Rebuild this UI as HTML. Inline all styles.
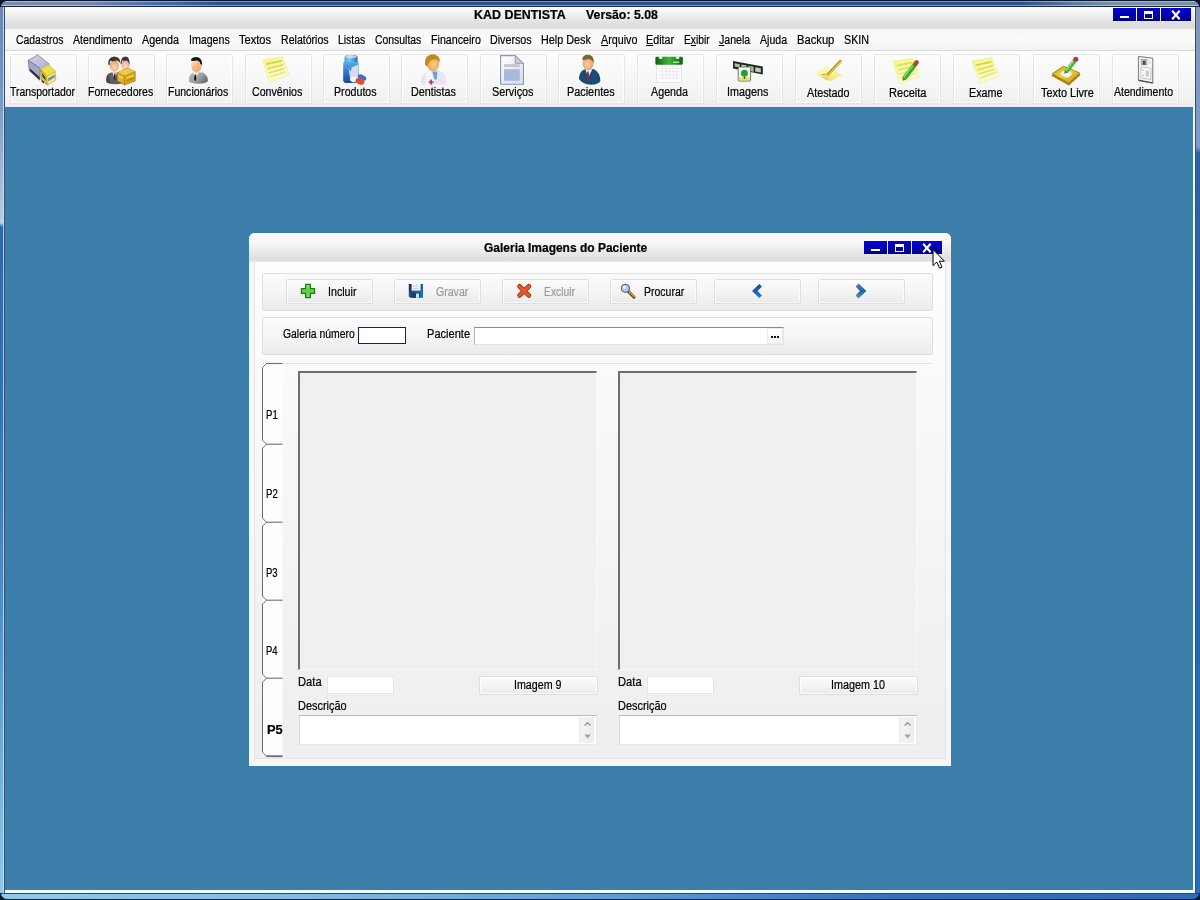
<!DOCTYPE html>
<html lang="pt-BR"><head><meta charset="utf-8"><title>KAD DENTISTA</title>
<style>
html,body{margin:0;padding:0}
body{width:1200px;height:900px;position:relative;overflow:hidden;background:#3d7fab;font-family:"Liberation Sans",sans-serif;font-size:12.5px;color:#000}
div,span,i,svg{position:absolute;box-sizing:border-box}
.t{white-space:pre;line-height:1;transform-origin:0 0;-webkit-text-stroke:0.22px currentColor}
.ic{overflow:visible}
u{text-decoration:underline;text-underline-offset:1px}
/* window frame */
.frame-t{left:0;top:0;width:1200px;height:7px;background:linear-gradient(#0c1830 0,#0c1830 1px,rgba(255,255,255,.38) 1px,rgba(255,255,255,.38) 2px,rgba(255,255,255,0) 2px,rgba(255,255,255,0) 5px,rgba(255,255,255,.42) 5px,rgba(255,255,255,.42) 6px,#1a2a44 6px,#1a2a44 7px),linear-gradient(90deg,#7c8cac 0,#7888ac 80px,#4a70b0 150px,#2a5290 220px,#2a5290 1020px,#5878a0 1070px,#7890a8 1110px,#7890a8 1200px)}
.frame-l{left:0;top:7px;width:5px;height:886px;background:linear-gradient(#6e86ae 0,#7a9ac4 95px,#b6cee6 216px,#2c68a8 220px,#3474b4 400px,#4c90cc 600px,#8cc8ec 886px);border-right:1px solid #34506e}
.frame-l:after{content:"";position:absolute;left:3px;top:0;width:1px;height:886px;background:rgba(220,236,246,.75)}
.frame-r{left:1195px;top:7px;width:5px;height:886px;background:linear-gradient(#8498b6 0,#7c9cc6 140px,#2c62a2 146px,#2a66ae 500px,#2a6cb8 886px);border-left:1px solid #34506e}
.frame-b{left:0;top:893px;width:1200px;height:7px;background:linear-gradient(90deg,#8ccaec 0,#7cbce6 300px,#5aa0da 600px,#2e72bc 900px,#2a6cb8 1200px);border-top:1px solid #2c4a6c;border-bottom:1px solid #0c1a30}
.client{left:5px;top:7px;width:1190px;height:886px;background:#3d7fab}
.titlebar{left:5px;top:7px;width:1190px;height:22px;background:linear-gradient(#fdfdfd 0,#f3f3f3 6px,#e8e8e8 12px,#dedede 17px,#dcdcdc 20px,#e2e2e2 22px)}
.menubar{left:5px;top:29px;width:1190px;height:22px;background:linear-gradient(#f6f6f6,#fbfbfb 60%,#f2f2f2);border-bottom:1px solid #dadada}
.toolbar{left:5px;top:51px;width:1190px;height:56px;background:linear-gradient(#fefefe 0,#f8f8f8 20px,#f1f1f1 48px,#ededf5 53px,#ebebf5 56px)}
.mdi{left:5px;top:107px;width:1188px;height:783px;background:#3d7fab;box-shadow:inset 1px 1px 0 #587494}
.mdi-edge-r{left:1193px;top:107px;width:2px;height:786px;background:#f2fbff}
.mdi-edge-b{left:5px;top:890px;width:1190px;height:3px;background:#f2fbff}
/* caption buttons */
.cap{background:linear-gradient(#0606cc 0,#0202ba 45%,#00007e 100%);overflow:hidden}
.cmin{left:7px;top:8px;width:9px;height:2px;background:#fff}
.cmax{left:7px;top:3px;width:9px;height:8px;border:1px solid #fff;border-top-width:3px}
.cx{left:10px;top:2px}
/* toolbar buttons */
.tbtn{top:54px;width:67px;height:50px;border:1px solid #e5e5e5;border-radius:2px;background:linear-gradient(#fcfcfc,#f6f6f6 60%,#f0f0f0);box-shadow:inset 0 0 0 1px rgba(255,255,255,.8)}
/* dialog */
.dlg{left:249px;top:233px;width:702px;height:533px;border-radius:6px 6px 0 0;background:#f7f7f7;box-shadow:inset 0 0 0 1px #eaf6fc}
.dlg-title{left:0;top:0;width:702px;height:29px;border-radius:6px 6px 0 0;background:linear-gradient(#ffffff 0,#f6f6f6 10px,#e8e8e8 20px,#dedede 26px,#e6e6e6 29px)}
.dlg-body{left:5px;top:29px;width:692px;height:497px;background:linear-gradient(#fefefe 0,#f9f9f9 150px,#f0f0f0 400px,#efefef 497px);border:1px solid #e9e4e4;border-top:none}
.panel{border:1px solid #e0e0e0;border-radius:2px;background:linear-gradient(#fbfbfb,#f5f5f5 50%,#ececec)}
.btn{border:1px solid #dedede;border-radius:2px;background:linear-gradient(#fbfbfb,#f3f3f3 55%,#ebebeb);box-shadow:inset 0 0 0 1px rgba(255,255,255,.7)}
.inp{background:#fff}
.focus{border:1px solid #1c1c64}
.sunk{border:1px solid #e4e4e4;border-top-color:#8a8a8a;border-left-color:#b4b4b4}
.flat{border:1px solid #e4e4e4}
.ta{border:1px solid #e8e8e8;border-top-color:#b8b8b8;border-left-color:#d8d8d8}
.dots{background:linear-gradient(#ffffff,#f5f5f5);border:1px solid #ebebeb}
.dots i{top:7px;width:2px;height:2px;background:#111}
.dots i:nth-child(1){left:3px}.dots i:nth-child(2){left:6px}.dots i:nth-child(3){left:9px}
.imgp{background:#f0f0f0;border:1px solid #f8f8f8;border-top:2px solid #6e6e6e;border-left:2px solid #6e6e6e}
.sb{width:15px;height:26px;background:linear-gradient(90deg,#f4f4f4,#ececec);border-left:1px solid #e8e8e8}
.pgline{left:282px;top:363px;width:651px;height:1px;background:#e2e2e2}
.txt{left:0;top:0;width:1200px;height:900px;will-change:transform}
.cr{width:7px;height:7px}
.cr1{left:0;top:0;background:radial-gradient(circle at 100% 100%,rgba(12,24,48,0) 5.5px,#0c1830 6.5px)}
.cr2{left:1193px;top:0;background:radial-gradient(circle at 0 100%,rgba(12,24,48,0) 5.5px,#0c1830 6.5px)}
.cr3{left:0;top:893px;background:radial-gradient(circle at 100% 0,rgba(12,24,48,0) 5.5px,#0c1830 6.5px)}
.cr4{left:1193px;top:893px;background:radial-gradient(circle at 0 0,rgba(12,24,48,0) 5.5px,#0c1830 6.5px)}

</style></head>
<body>
<div class="frame"></div>
<div class="frame-l"></div><div class="frame-r"></div><div class="frame-t"></div><div class="frame-b"></div>
<div class="client"></div>
<div class="titlebar"></div>
<div class="menubar"></div>
<div class="toolbar"></div>
<div class="mdi"></div><div class="mdi-edge-r"></div><div class="mdi-edge-b"></div>
<div class="cap main" style="left:1113px;top:8px;width:23px;height:13px"><i class="cmin"></i></div><div class="cap main" style="left:1137px;top:8px;width:23px;height:13px"><i class="cmax"></i></div><div class="cap main" style="left:1161px;top:8px;width:30px;height:13px"><svg width="10" height="10" viewBox="0 0 10 10" class="cx"><path d="M1.2,0.8 L8.6,9.2 M8.6,0.8 L1.2,9.2" stroke="#fff" stroke-width="2.1"/></svg></div>
<div class="tbtn" style="left:10.0px"></div>
<svg class="ic" style="left:26px;top:52px" width="34" height="36" viewBox="26 52 34 36" >
<defs><linearGradient id="tk1" x1="0" y1="0" x2="1" y2="1"><stop offset="0" stop-color="#d0d0ea"/><stop offset="1" stop-color="#b4b4d6"/></linearGradient></defs>
<polygon points="28.2,60.2 37.8,54.9 49.3,64.2 39.8,68.2" fill="url(#tk1)" stroke="#80809a" stroke-width="0.8"/>
<polygon points="28.2,60.2 39.8,68.2 39.8,80.2 29.3,70.6" fill="#a6a6c6" stroke="#70708c" stroke-width="0.8"/>
<polygon points="39.8,68.2 49.3,64.2 49.6,67 40,71" fill="#e8d8e0"/>
<polygon points="29.6,70.8 39.6,80 39.6,77 30,68.5" fill="#303038"/>
<polygon points="40.4,69 49.6,65.4 55.2,71.6 46.4,76.6" fill="#efe23c" stroke="#b8a820" stroke-width="0.6"/>
<polygon points="40.4,69 46.4,76.6 47.4,85 41.4,79.6" fill="#d6c63a" stroke="#8c7c18" stroke-width="0.6"/>
<polygon points="46.4,76.6 55.2,71.6 55.8,80 47.4,85" fill="#f4ec94" stroke="#a89820" stroke-width="0.6"/>
<polygon points="47.6,78.6 54.6,74.6 54.9,77.2 48,81.4" fill="#8c8c84"/>
<polygon points="42,73 45.2,77.2 45.6,80.4 42.4,76.6" fill="#3c3820"/>
<polygon points="41.6,79.8 44,82 44,83.6 41.6,81.4" fill="#181810"/>
</svg>
<div class="tbtn" style="left:88.0px"></div>
<svg class="ic" style="left:104px;top:54px" width="34" height="33" viewBox="104 54 34 33" >
<defs><linearGradient id="sp1" x1="0" y1="0" x2="1" y2="1"><stop offset="0" stop-color="#ecc838"/><stop offset="1" stop-color="#cc980c"/></linearGradient>
<radialGradient id="sp2" cx="0.5" cy="0.6" r="0.6"><stop offset="0" stop-color="#fcd8b0"/><stop offset="0.7" stop-color="#f0b080"/><stop offset="1" stop-color="#c88050"/></radialGradient>
<radialGradient id="sp3" cx="0.5" cy="0.6" r="0.6"><stop offset="0" stop-color="#fcdcd0"/><stop offset="0.7" stop-color="#f0b8a8"/><stop offset="1" stop-color="#c08070"/></radialGradient></defs>
<path d="M106.2,80 Q106,74 111,72.4 L118.6,72.4 Q122,73.4 122.4,78 L122,83.6 Q114,85.6 106.8,82.4 Z" fill="#66605a"/>
<path d="M106.2,80 Q106,76 108.6,73.6 L110.6,83.6 Q108,83.2 106.8,82.4 Z" fill="#4c4842"/>
<polygon points="112.4,72.4 114.8,79 117.2,72.4" fill="#f6eeea"/>
<polygon points="114.2,73.4 115.6,73.4 115.8,79 114.8,80.8 113.8,79" fill="#561a4c"/>
<ellipse cx="114.4" cy="66" rx="4.5" ry="5.8" fill="url(#sp2)"/>
<path d="M108.2,64.6 Q107.8,57 114.4,56.6 Q121,57 120.6,65 Q119.6,61 116.6,60.6 Q113,61.6 110.4,60.8 Q109.6,62.6 109.6,65.6 Z" fill="#3e3628"/>
<ellipse cx="125.4" cy="65.2" rx="3.9" ry="5.3" fill="url(#sp3)"/>
<path d="M120.8,63.2 Q120.8,56.8 125.8,56.6 Q130,57 129.6,65.4 Q128.8,61.2 126.6,60.4 Q123.6,61 122.2,60.6 Q121.6,62 121.6,64.6 Z" fill="#4a2c36"/>
<polygon points="117.4,72.6 127.6,68 135.2,71.6 135.2,81 124.4,85 117.4,80.6" fill="url(#sp1)" stroke="#a88010" stroke-width="0.7"/>
<polygon points="117.4,72.6 127.6,68 135.2,71.6 124.8,76.2" fill="#f0d048" opacity="0.85"/>
<polyline points="117.4,72.6 124.8,76.2 135.2,71.6" fill="none" stroke="#a0780c" stroke-width="0.7"/>
<line x1="124.8" y1="76.2" x2="124.4" y2="85" stroke="#a0780c" stroke-width="0.7"/>
<polygon points="126.6,77.4 133.6,74.8 133.6,76.2 126.6,78.8" fill="#f4dc60"/>
<polygon points="126.6,79.8 133.6,77.2 133.6,78.8 126.6,81.4" fill="#b88810"/>
<polygon points="118.8,75.4 123.4,77.6 123.4,79 118.8,76.8" fill="#f0d450"/>
</svg>
<div class="tbtn" style="left:166.4px"></div>
<svg class="ic" style="left:186px;top:54px" width="26" height="32" viewBox="186 54 26 32" >
<defs><linearGradient id="em1" x1="0" y1="0" x2="0.6" y2="1"><stop offset="0" stop-color="#fdfdf6"/><stop offset="0.6" stop-color="#f6b888"/><stop offset="1" stop-color="#f0a870"/></linearGradient>
<linearGradient id="em2" x1="0" y1="0" x2="1" y2="0.6"><stop offset="0" stop-color="#b4b4b8"/><stop offset="0.6" stop-color="#a0a0a4"/><stop offset="1" stop-color="#6c6c70"/></linearGradient></defs>
<path d="M188.8,81.6 Q188.8,75 193,72.6 L203,72.6 Q208,75.6 208,81 Q206,83.8 198,83.8 Q191.6,83.6 188.8,81.6 Z" fill="url(#em2)"/>
<polygon points="192.8,72.6 195.4,79.4 198.6,72.6" fill="#f8f4e0"/>
<polygon points="194.6,74.4 196.2,74.4 196.4,79 195.2,81.6 194,79" fill="#18181c"/>
<ellipse cx="196.4" cy="65.4" rx="5.4" ry="6.9" fill="url(#em1)"/>
<path d="M190.8,60.6 Q191,57 196.6,57 Q202.4,57.4 202,65 Q201.6,64.6 200.4,64 Q200,60.4 196,60.4 Q192.4,61.6 190.8,60.6 Z" fill="#181818"/>
</svg>
<div class="tbtn" style="left:245.0px"></div>
<svg class="ic" style="left:260px;top:54px" width="32" height="31" viewBox="260 54 32 31" ><defs><linearGradient id="nt1" x1="0" y1="0" x2="0.5" y2="1"><stop offset="0" stop-color="#f5f578"/><stop offset="1" stop-color="#fcfcd8"/></linearGradient></defs><polygon points="262.9,59.8 282.4,56.7 289.1,74.9 269.1,82.4" fill="url(#nt1)" stroke="#ececa0" stroke-width="0.7"/><line x1="266.2" y1="64.1" x2="281.8" y2="60.9" stroke="#d2d24c" stroke-width="1.6" opacity="1.00"/><line x1="267.5" y1="68.8" x2="283.2" y2="64.8" stroke="#d2d24c" stroke-width="1.6" opacity="0.83"/><line x1="268.7" y1="73.0" x2="284.5" y2="68.4" stroke="#d2d24c" stroke-width="1.6" opacity="0.66"/><line x1="269.8" y1="77.0" x2="285.7" y2="71.7" stroke="#d2d24c" stroke-width="1.6" opacity="0.49"/></svg>
<div class="tbtn" style="left:323.0px"></div>
<svg class="ic" style="left:341px;top:53px" width="28" height="33" viewBox="341 53 28 33" >
<defs><linearGradient id="pl1" x1="0" y1="0" x2="1" y2="0"><stop offset="0" stop-color="#4c98dc"/><stop offset="0.35" stop-color="#88ccf0"/><stop offset="1" stop-color="#3468b8"/></linearGradient>
<linearGradient id="pl2" x1="0" y1="0" x2="0" y2="1"><stop offset="0" stop-color="#5cb4e8"/><stop offset="0.5" stop-color="#2c78cc"/><stop offset="1" stop-color="#1448a0"/></linearGradient></defs>
<rect x="343.2" y="61" width="15.4" height="22" rx="3" fill="url(#pl2)"/>
<path d="M344.6,57 Q344.6,54.8 351,54.8 Q357.6,54.8 357.6,57 L357.6,62 L344.6,62 Z" fill="url(#pl1)"/>
<ellipse cx="351" cy="56.6" rx="5.6" ry="1.6" fill="#c8e8f8" opacity="0.8"/>
<polygon points="348.6,68.4 358.4,64.6 358.4,76.6 350.4,80.4" fill="#d8d8f0"/>
<polygon points="349.2,68.6 352,67.6 350,71.6" fill="#4868a0"/>
<ellipse cx="362" cy="77.6" rx="4.6" ry="2.6" fill="#3c70c0" transform="rotate(25 362 77.6)"/>
<ellipse cx="354.6" cy="79.4" rx="4.4" ry="2.8" fill="#f4f0f8"/>
<ellipse cx="360" cy="81.4" rx="4.6" ry="2.9" fill="#e84828" transform="rotate(20 360 81.4)"/>
</svg>
<div class="tbtn" style="left:401.4px"></div>
<svg class="ic" style="left:418px;top:52px" width="31" height="34" viewBox="418 52 31 34" >
<defs><radialGradient id="dt1" cx="0.55" cy="0.55" r="0.6"><stop offset="0" stop-color="#fcd088"/><stop offset="1" stop-color="#e89c48"/></radialGradient></defs>
<path d="M420.6,84.8 Q420.4,75 425.6,72.2 L431,70 L437.6,70 L442.4,72.2 Q446.6,75 446.6,84.8 Z" fill="#e8e6f6"/>
<path d="M425.6,72.2 L431,70 L434,78 L432,84.8 L426,84.8 Z" fill="#f4f2fc"/>
<polygon points="432.2,71.6 437.4,71.6 436.8,79.4 434.4,79.4" fill="#6c9ce8"/>
<rect x="428.6" y="81" width="5" height="2.2" fill="#e06078"/><rect x="430.2" y="79.6" width="1.8" height="5" fill="#c03858"/>
<ellipse cx="433" cy="63.6" rx="6.2" ry="7.6" fill="url(#dt1)"/>
<path d="M425,64 Q424.4,55 432.4,54.2 Q440.4,54.6 439.8,62 Q437.6,58.4 433.6,59.4 Q428.4,59.6 427.6,66.6 Q425.6,66.6 425,64 Z" fill="#c48820"/>
</svg>
<div class="tbtn" style="left:480.0px"></div>
<svg class="ic" style="left:498px;top:53px" width="28" height="34" viewBox="498 53 28 34" >
<defs><linearGradient id="dc1" x1="0" y1="0" x2="0.7" y2="1"><stop offset="0" stop-color="#ffffff"/><stop offset="1" stop-color="#d8e2f4"/></linearGradient></defs>
<path d="M500.6,55.6 H515.2 L523.4,63.4 V84.2 H500.6 Z" fill="url(#dc1)" stroke="#8c98ac" stroke-width="1.1"/>
<polygon points="515.2,55.6 515.2,63.4 523.4,63.4" fill="#c4cce0" stroke="#8c98ac" stroke-width="0.8"/>
<rect x="504" y="64.2" width="15.8" height="2.8" fill="#c4c8cc"/>
<rect x="504" y="69.2" width="15.8" height="11.6" fill="#aab8dc"/>
</svg>
<div class="tbtn" style="left:558.0px"></div>
<svg class="ic" style="left:577px;top:53px" width="26" height="34" viewBox="577 53 26 34" >
<defs><radialGradient id="pt1" cx="0.45" cy="0.55" r="0.6"><stop offset="0" stop-color="#fcd0a8"/><stop offset="1" stop-color="#e09868"/></radialGradient></defs>
<path d="M579,79 Q579,72 584,69.6 L593.6,69 Q600.4,72.4 600.4,81 Q598,85 591,84.8 Q582,84 579,79 Z" fill="#1c4a74"/>
<polygon points="585.4,69.6 588.2,77.6 592.4,69.2" fill="#f0ecf4"/>
<polygon points="587.2,71.6 588.8,71.6 589,78 587.8,81 586.6,78" fill="#902848"/>
<ellipse cx="588" cy="63.4" rx="5.4" ry="6.8" fill="url(#pt1)"/>
<path d="M582.2,59.8 Q582.4,54.8 588.4,54.8 Q594.4,55.2 593.8,63.6 Q592.4,58.8 588,59 Q584.4,60.4 582.2,59.8 Z" fill="#7c6434"/>
</svg>
<div class="tbtn" style="left:637.0px"></div>
<svg class="ic" style="left:653px;top:54px" width="32" height="31" viewBox="653 54 32 31" >
<defs><linearGradient id="cl1" x1="0" y1="0" x2="1" y2="0"><stop offset="0" stop-color="#0c640c"/><stop offset="0.5" stop-color="#44b444"/><stop offset="1" stop-color="#0c640c"/></linearGradient></defs>
<rect x="656.6" y="64" width="25" height="18.4" fill="#fdfdfd" stroke="#e2e2e6" stroke-width="0.8"/>
<g stroke="#e4dcea" stroke-width="0.6"><line x1="659" y1="68.4" x2="679.6" y2="68.4"/><line x1="659" y1="71.6" x2="679.6" y2="71.6"/><line x1="659" y1="74.8" x2="679.6" y2="74.8"/><line x1="659" y1="78" x2="679.6" y2="78"/>
<line x1="662.4" y1="67" x2="662.4" y2="80"/><line x1="666" y1="67" x2="666" y2="80"/><line x1="669.6" y1="67" x2="669.6" y2="80"/><line x1="673.2" y1="67" x2="673.2" y2="80"/><line x1="676.8" y1="67" x2="676.8" y2="80"/></g>
<rect x="655.4" y="56.8" width="27.4" height="8" rx="1.4" fill="url(#cl1)"/>
<ellipse cx="660.6" cy="57.6" rx="1.8" ry="1.5" fill="#e8f8e8"/><ellipse cx="677.6" cy="57.6" rx="1.8" ry="1.5" fill="#e8f8e8"/>
<rect x="673" y="61.4" width="6.4" height="1.6" rx="0.8" fill="#a8f0a0"/>
</svg>
<div class="tbtn" style="left:716.0px"></div>
<svg class="ic" style="left:731px;top:59px" width="34" height="24" viewBox="731 59 34 24" >
<polygon points="733,61 762.8,66.4 762.8,74.6 733,68.6" fill="#1c2c1c"/>
<polygon points="734.6,63.2 739.8,64.2 739.8,67.6 734.6,66.6" fill="#a8c0a0"/>
<polygon points="741.4,64.4 746.6,65.4 746.6,68.8 741.4,67.8" fill="#b8c8c8"/>
<polygon points="748.2,65.8 753.6,66.8 753.6,71.8 748.2,70.8" fill="#b4c0b0"/>
<polygon points="755.2,67.2 760.8,68.2 760.8,72.4 755.2,71.4" fill="#c4ccb8"/>
<rect x="738.2" y="67" width="12.4" height="14" rx="1" fill="#f2f8f4" stroke="#4c5c3c" stroke-width="0.8"/>
<rect x="739" y="77.4" width="10.8" height="3" fill="#e8e444"/>
<rect x="743.8" y="75" width="1.4" height="4" fill="#2c6c1c"/>
<circle cx="744.4" cy="73.2" r="3.5" fill="#2ca02c"/>
</svg>
<div class="tbtn" style="left:795.0px"></div>
<svg class="ic" style="left:812px;top:58px" width="32" height="26" viewBox="812 58 32 26" >
<defs><linearGradient id="sg1" x1="0" y1="0" x2="0.3" y2="1"><stop offset="0" stop-color="#fbfbf0"/><stop offset="0.5" stop-color="#f8f6b0"/><stop offset="1" stop-color="#f4e870"/></linearGradient></defs>
<polygon points="814.2,73.6 826,64.8 842,75.2 829.8,81.6" fill="url(#sg1)"/>
<polygon points="822,77 828,74.6 829.6,80 825,80" fill="#f0c878" opacity="0.7"/>
<line x1="840.4" y1="61.2" x2="828.4" y2="74" stroke="#b89818" stroke-width="2.9" stroke-linecap="round"/>
<line x1="840.8" y1="61.6" x2="828.8" y2="74.4" stroke="#e8d050" stroke-width="1.1" stroke-linecap="round"/>
<line x1="828.4" y1="74" x2="821.4" y2="74.8" stroke="#c8b030" stroke-width="1.2"/>
</svg>
<div class="tbtn" style="left:874.0px"></div>
<svg class="ic" style="left:890px;top:55px" width="33" height="31" viewBox="890 55 33 31" ><defs><linearGradient id="nt3" x1="0" y1="0" x2="0.5" y2="1"><stop offset="0" stop-color="#f5f578"/><stop offset="1" stop-color="#fcfcd8"/></linearGradient></defs><polygon points="893.1,61.6 912.7,58.0 919.8,76.7 899.8,83.3" fill="url(#nt3)" stroke="#ececa0" stroke-width="0.7"/><line x1="896.5" y1="65.7" x2="912.2" y2="62.4" stroke="#dcdc60" stroke-width="1.6" opacity="1.00"/><line x1="897.9" y1="70.2" x2="913.7" y2="66.3" stroke="#dcdc60" stroke-width="1.6" opacity="0.83"/><line x1="899.2" y1="74.3" x2="915.0" y2="70.0" stroke="#dcdc60" stroke-width="1.6" opacity="0.66"/><line x1="900.4" y1="78.1" x2="916.3" y2="73.4" stroke="#dcdc60" stroke-width="1.6" opacity="0.49"/>
<line x1="915.2" y1="64.2" x2="904.6" y2="78" stroke="#3cac2c" stroke-width="4.6"/>
<line x1="914.2" y1="63.6" x2="903.8" y2="77.2" stroke="#7ce060" stroke-width="1.4"/>
<polygon points="902.6,76.4 906.4,79.4 902.6,80.8" fill="#6c7c1c"/>
<line x1="916.6" y1="62.4" x2="915.2" y2="64.2" stroke="#b04c20" stroke-width="4.6" stroke-linecap="round"/>
</svg>
<div class="tbtn" style="left:953.4px"></div>
<svg class="ic" style="left:969px;top:55px" width="33" height="31" viewBox="969 55 33 31" ><defs><linearGradient id="nt2" x1="0" y1="0" x2="0.5" y2="1"><stop offset="0" stop-color="#f5f578"/><stop offset="1" stop-color="#fcfcd8"/></linearGradient></defs><polygon points="971.8,61.1 991.8,57.6 999.3,75.8 979.8,83.3" fill="url(#nt2)" stroke="#ececa0" stroke-width="0.7"/><line x1="975.5" y1="65.3" x2="991.4" y2="61.9" stroke="#d2d24c" stroke-width="1.6" opacity="1.00"/><line x1="977.1" y1="69.9" x2="993.0" y2="65.8" stroke="#d2d24c" stroke-width="1.6" opacity="0.83"/><line x1="978.6" y1="74.0" x2="994.4" y2="69.3" stroke="#d2d24c" stroke-width="1.6" opacity="0.66"/><line x1="980.1" y1="78.0" x2="995.8" y2="72.6" stroke="#d2d24c" stroke-width="1.6" opacity="0.49"/></svg>
<div class="tbtn" style="left:1033.0px"></div>
<svg class="ic" style="left:1050px;top:56px" width="32" height="31" viewBox="1050 56 32 31" >
<defs><linearGradient id="st1" x1="0" y1="0" x2="1" y2="1"><stop offset="0" stop-color="#b89c18"/><stop offset="0.45" stop-color="#ecd23c"/><stop offset="1" stop-color="#c8921c"/></linearGradient>
<radialGradient id="st2" cx="0.5" cy="0.5" r="0.5"><stop offset="0" stop-color="#ffffff"/><stop offset="0.6" stop-color="#f4f4ec"/><stop offset="1" stop-color="#e8d890" stop-opacity="0.2"/></radialGradient></defs>
<polygon points="1052.2,75.4 1063.4,68 1079.8,74.8 1068.8,84.8" fill="#a8800c" stroke="#a8800c" stroke-width="1.2" stroke-linejoin="round"/>
<polygon points="1052.2,73.8 1063.4,66.2 1079.8,73 1068.8,83" fill="url(#st1)" stroke="#b08c14" stroke-width="1" stroke-linejoin="round"/>
<polygon points="1058.6,73.6 1064.8,69.4 1073.6,73 1067.6,78.6" fill="url(#st2)"/>
<line x1="1075" y1="60.4" x2="1066.6" y2="71.2" stroke="#48b438" stroke-width="4.2"/>
<line x1="1074" y1="60" x2="1065.8" y2="70.6" stroke="#98e478" stroke-width="1.3"/>
<polygon points="1064.6,70 1068.2,72.6 1064.4,73.8" fill="#407868"/>
<circle cx="1075.8" cy="59.2" r="2.5" fill="#b43452"/>
</svg>
<div class="tbtn" style="left:1112.0px"></div>
<svg class="ic" style="left:1136px;top:54px" width="19" height="32" viewBox="1136 54 19 32" >
<polygon points="1138.4,56.4 1152.8,58.2 1152.8,83.2 1138.4,80.6" fill="#f4f4f4" stroke="#787878" stroke-width="1"/>
<line x1="1138.4" y1="80.2" x2="1152.8" y2="82.8" stroke="#585858" stroke-width="1.3"/>
<rect x="1141.2" y="59.6" width="5.6" height="5.2" fill="#d8d8d8" stroke="#8c8c8c" stroke-width="0.6"/>
<rect x="1142.6" y="60.6" width="3" height="4.2" fill="#4c4c4c"/>
<line x1="1148" y1="61" x2="1151" y2="61.4" stroke="#c4c4c4" stroke-width="0.6"/><line x1="1148" y1="63" x2="1151" y2="63.4" stroke="#c4c4c4" stroke-width="0.6"/>
<polygon points="1140.8,66.8 1150.8,68.2 1150.8,79.4 1140.8,77.8" fill="#fdfdfd" stroke="#acacac" stroke-width="0.7"/>
<rect x="1145.6" y="70.6" width="3.2" height="6" fill="#c8c8c8"/>
<line x1="1142.2" y1="70" x2="1143.8" y2="70.2" stroke="#8890a8" stroke-width="0.8"/><line x1="1142.2" y1="75.6" x2="1143.8" y2="75.8" stroke="#8890a8" stroke-width="0.8"/>
</svg>
<div class="dlg"><div class="dlg-title"></div><div class="dlg-body"></div></div>
<div class="cap dlgcap" style="left:864px;top:241px;width:23px;height:13px"><i class="cmin"></i></div><div class="cap dlgcap" style="left:888px;top:241px;width:23px;height:13px"><i class="cmax"></i></div><div class="cap dlgcap" style="left:912px;top:241px;width:30px;height:13px"><svg width="10" height="10" viewBox="0 0 10 10" class="cx"><path d="M1.2,0.8 L8.6,9.2 M8.6,0.8 L1.2,9.2" stroke="#fff" stroke-width="2.1"/></svg></div>
<div class="panel" style="left:262px;top:273px;width:671px;height:38px"></div>
<div class="panel" style="left:262px;top:317px;width:671px;height:38px"></div>
<div class="btn" style="left:286px;top:279px;width:87px;height:25px"></div>
<svg class="ic" style="left:299px;top:282px" width="18" height="18" viewBox="299 282 18 18" >
<defs><linearGradient id="pg1" x1="0" y1="0" x2="0" y2="1"><stop offset="0" stop-color="#90e878"/><stop offset="0.5" stop-color="#5cd040"/><stop offset="1" stop-color="#78dc60"/></linearGradient></defs>
<path d="M305.6,284.4 H310.4 V288.6 H314.6 V293.4 H310.4 V297.6 H305.6 V293.4 H301.4 V288.6 H305.6 Z" fill="url(#pg1)" stroke="#1c7c0c" stroke-width="1.2" stroke-linejoin="miter"/>
</svg>
<div class="btn" style="left:394px;top:279px;width:87px;height:25px"></div>
<svg class="ic" style="left:407px;top:282px" width="18" height="18" viewBox="407 282 18 18" >
<defs><linearGradient id="sv1" x1="0" y1="0" x2="1" y2="1"><stop offset="0" stop-color="#0c2440"/><stop offset="0.5" stop-color="#1c58a0"/><stop offset="1" stop-color="#2c70c0"/></linearGradient></defs>
<path d="M408.8,284 H423 V297.8 H410.2 L408.8,296.4 Z" fill="url(#sv1)"/>
<rect x="411.6" y="284" width="9" height="6.6" fill="#f0f4fc"/>
<line x1="413" y1="286" x2="418" y2="286" stroke="#b0b8c8" stroke-width="0.6"/><line x1="413" y1="288.4" x2="418" y2="288.4" stroke="#c8a0b8" stroke-width="0.6"/>
<rect x="411.4" y="293.2" width="8.4" height="4.6" fill="#183c70"/>
<rect x="416" y="293.6" width="3" height="4.2" fill="#b8ecf8"/>
</svg>
<div class="btn" style="left:502px;top:279px;width:87px;height:25px"></div>
<svg class="ic" style="left:515px;top:282px" width="18" height="18" viewBox="515 282 18 18" >
<g stroke-linecap="round"><path d="M519.6,286.4 L528.8,295.4 M528.8,286.4 L519.6,295.4" stroke="#8c3010" stroke-width="4.8"/>
<path d="M519.6,286.4 L528.8,295.4 M528.8,286.4 L519.6,295.4" stroke="#ec5430" stroke-width="3.2"/></g>
</svg>
<div class="btn" style="left:610px;top:279px;width:87px;height:25px"></div>
<svg class="ic" style="left:618px;top:282px" width="20" height="18" viewBox="618 282 20 18" >
<line x1="628.6" y1="291.6" x2="634" y2="297.2" stroke="#5c4018" stroke-width="3" stroke-linecap="round"/>
<line x1="629.2" y1="291.8" x2="634" y2="296.8" stroke="#d09848" stroke-width="1.4" stroke-linecap="round"/>
<circle cx="625.4" cy="288.3" r="4" fill="#b0ccf4" stroke="#5c6c74" stroke-width="1.2"/>
<circle cx="624.4" cy="287.2" r="1.6" fill="#e4f0fc"/>
</svg>
<div class="btn" style="left:714px;top:279px;width:87px;height:25px"></div>
<svg class="ic" style="left:750px;top:282px" width="14" height="18" viewBox="750 282 14 18" >
<defs><linearGradient id="pv1" x1="0" y1="0" x2="0" y2="1"><stop offset="0" stop-color="#1c4878"/><stop offset="0.4" stop-color="#2058b4"/><stop offset="1" stop-color="#2c78c8"/></linearGradient></defs>
<polygon points="752,290.9 759.3,283.9 761.9,286.4 757.6,290.9 761.9,295.5 759.3,297.9" fill="url(#pv1)"/>
</svg>
<div class="btn" style="left:818px;top:279px;width:87px;height:25px"></div>
<svg class="ic" style="left:854px;top:282px" width="14" height="18" viewBox="854 282 14 18" >
<defs><linearGradient id="nx1" x1="0" y1="0" x2="0" y2="1"><stop offset="0" stop-color="#5c78c8"/><stop offset="0.5" stop-color="#1c64b0"/><stop offset="1" stop-color="#4c98d0"/></linearGradient></defs>
<polygon points="866,290.9 858.6,283.9 856,286.4 860.2,290.9 856,295.5 858.6,297.9" fill="url(#nx1)" stroke="#184068" stroke-width="0.5"/>
</svg>
<div class="inp focus" style="left:358px;top:327px;width:48px;height:17px"></div>
<div class="inp sunk" style="left:474px;top:327px;width:310px;height:17.5px"></div>
<div class="dots" style="left:767px;top:328px;width:16px;height:16px"><i></i><i></i><i></i></div>
<div class="pgline"></div>
<svg class="ic" style="left:258px;top:360px" width="28" height="402" viewBox="258 360 28 402" ><rect x="262.5" y="363.5" width="20" height="393" fill="#fdfdfd"/><path d="M266.5,363.5 L262.5,367.5 V440.2 L266.5,444.2" fill="none" stroke="#6a6a6a" stroke-width="1"/><path d="M266.5,444.2 L262.5,448.2 V518.2 L266.5,522.2" fill="none" stroke="#6a6a6a" stroke-width="1"/><path d="M266.5,522.2 L262.5,526.2 V596.2 L266.5,600.2" fill="none" stroke="#6a6a6a" stroke-width="1"/><path d="M266.5,600.2 L262.5,604.2 V674.2 L266.5,678.2" fill="none" stroke="#6a6a6a" stroke-width="1"/><path d="M266.5,678.2 L262.5,682.2 V752.2 L266.5,756.2" fill="none" stroke="#6a6a6a" stroke-width="1"/><line x1="266.2" y1="363.5" x2="282.5" y2="363.5" stroke="#6e6e6e" stroke-width="1.1"/><line x1="266.2" y1="444.2" x2="282.5" y2="444.2" stroke="#6e6e6e" stroke-width="1.1"/><line x1="266.2" y1="522.2" x2="282.5" y2="522.2" stroke="#6e6e6e" stroke-width="1.1"/><line x1="266.2" y1="600.2" x2="282.5" y2="600.2" stroke="#6e6e6e" stroke-width="1.1"/><line x1="266.2" y1="678.2" x2="282.5" y2="678.2" stroke="#6e6e6e" stroke-width="1.1"/><line x1="266.2" y1="756.2" x2="282.5" y2="756.2" stroke="#6e6e6e" stroke-width="1.8"/></svg>
<div class="imgp" style="left:298px;top:371px;width:299px;height:299px"></div>
<div class="inp flat" style="left:326.5px;top:675.5px;width:67.5px;height:18px"></div>
<div class="btn" style="left:478.5px;top:675.5px;width:119px;height:19px"></div>
<div class="inp ta" style="left:298.5px;top:715px;width:298.5px;height:29.5px"></div>
<div class="sb" style="left:579px;top:717px"><svg width="15" height="26" viewBox="0 0 15 26"><polyline points="4.6,8.6 7.6,5.6 10.6,8.6" fill="none" stroke="#8c8c8c" stroke-width="1.3"/><polygon points="4.4,17.6 10.8,17.6 7.6,21.4" fill="#a4a4a4"/></svg></div>
<div class="imgp" style="left:618px;top:371px;width:299px;height:299px"></div>
<div class="inp flat" style="left:646.5px;top:675.5px;width:67.5px;height:18px"></div>
<div class="btn" style="left:798.5px;top:675.5px;width:119px;height:19px"></div>
<div class="inp ta" style="left:618.5px;top:715px;width:298.5px;height:29.5px"></div>
<div class="sb" style="left:899px;top:717px"><svg width="15" height="26" viewBox="0 0 15 26"><polyline points="4.6,8.6 7.6,5.6 10.6,8.6" fill="none" stroke="#8c8c8c" stroke-width="1.3"/><polygon points="4.4,17.6 10.8,17.6 7.6,21.4" fill="#a4a4a4"/></svg></div>
<div class="txt"><span class="t" style="left:473.59px;top:8.6px;transform:scaleX(0.9956);font-weight:bold;">KAD DENTISTA</span><span class="t" style="left:585.54px;top:8.6px;transform:scaleX(0.9848);font-weight:bold;">Versão: 5.08</span><span class="t" style="left:15.88px;top:34.0px;transform:scaleX(0.8331);">Cadastros</span><span class="t" style="left:73.00px;top:34.0px;transform:scaleX(0.8466);">Atendimento</span><span class="t" style="left:142.00px;top:34.0px;transform:scaleX(0.8592);">Agenda</span><span class="t" style="left:188.64px;top:34.0px;transform:scaleX(0.8496);">Imagens</span><span class="t" style="left:239.38px;top:34.0px;transform:scaleX(0.8861);">Textos</span><span class="t" style="left:280.75px;top:34.0px;transform:scaleX(0.8465);">Relatórios</span><span class="t" style="left:338.17px;top:34.0px;transform:scaleX(0.8337);">Listas</span><span class="t" style="left:375.08px;top:34.0px;transform:scaleX(0.8330);">Consultas</span><span class="t" style="left:430.55px;top:34.0px;transform:scaleX(0.8545);">Financeiro</span><span class="t" style="left:489.74px;top:34.0px;transform:scaleX(0.8562);">Diversos</span><span class="t" style="left:540.74px;top:34.0px;transform:scaleX(0.8644);">Help Desk</span><span class="t" style="left:601.00px;top:34.0px;transform:scaleX(0.8597);"><u>A</u>rquivo</span><span class="t" style="left:646.14px;top:34.0px;transform:scaleX(0.8588);"><u>E</u>ditar</span><span class="t" style="left:683.58px;top:34.0px;transform:scaleX(0.8183);">E<u>x</u>ibir</span><span class="t" style="left:718.84px;top:34.0px;transform:scaleX(0.8464);"><u>J</u>anela</span><span class="t" style="left:760.00px;top:34.0px;transform:scaleX(0.8454);">Ajuda</span><span class="t" style="left:797.10px;top:34.0px;transform:scaleX(0.8958);">Backup</span><span class="t" style="left:843.92px;top:34.0px;transform:scaleX(0.8562);">SKIN</span><span class="t" style="left:10.19px;top:86.0px;transform:scaleX(0.8329);">Transportador</span><span class="t" style="left:88.15px;top:86.0px;transform:scaleX(0.8456);">Fornecedores</span><span class="t" style="left:168.16px;top:86.0px;transform:scaleX(0.8414);">Funcionários</span><span class="t" style="left:252.07px;top:86.0px;transform:scaleX(0.8517);">Convênios</span><span class="t" style="left:333.75px;top:86.0px;transform:scaleX(0.8514);">Produtos</span><span class="t" style="left:410.54px;top:86.0px;transform:scaleX(0.8602);">Dentistas</span><span class="t" style="left:491.91px;top:86.0px;transform:scaleX(0.8650);">Serviços</span><span class="t" style="left:566.73px;top:86.0px;transform:scaleX(0.8683);">Pacientes</span><span class="t" style="left:651.00px;top:86.0px;transform:scaleX(0.8592);">Agenda</span><span class="t" style="left:727.03px;top:86.0px;transform:scaleX(0.8625);">Imagens</span><span class="t" style="left:807.00px;top:87.0px;transform:scaleX(0.8604);">Atestado</span><span class="t" style="left:888.52px;top:87.0px;transform:scaleX(0.8846);">Receita</span><span class="t" style="left:969.44px;top:87.0px;transform:scaleX(0.8603);">Exame</span><span class="t" style="left:1041.18px;top:87.0px;transform:scaleX(0.8721);">Texto Livre</span><span class="t" style="left:1114.40px;top:86.0px;transform:scaleX(0.8409);">Atendimento</span><span class="t" style="left:484.22px;top:241.6px;transform:scaleX(0.9989);font-size:12px;font-weight:bold;">Galeria Imagens do Paciente</span><span class="t" style="left:327.74px;top:285.8px;transform:scaleX(0.8531);">Incluir</span><span class="t" style="left:435.87px;top:285.8px;transform:scaleX(0.8455);color:#9a9a9a;">Gravar</span><span class="t" style="left:544.17px;top:285.8px;transform:scaleX(0.8262);color:#9a9a9a;">Excluir</span><span class="t" style="left:643.96px;top:285.8px;transform:scaleX(0.8396);">Procurar</span><span class="t" style="left:282.78px;top:328.0px;transform:scaleX(0.8318);">Galeria número</span><span class="t" style="left:427.41px;top:328.0px;transform:scaleX(0.8861);">Paciente</span><span class="t" style="left:266.03px;top:408.7px;transform:scaleX(0.7991);font-size:12px;">P1</span><span class="t" style="left:266.03px;top:488.3px;transform:scaleX(0.8028);font-size:12px;">P2</span><span class="t" style="left:266.04px;top:566.8px;transform:scaleX(0.7955);font-size:12px;">P3</span><span class="t" style="left:266.04px;top:644.8px;transform:scaleX(0.7883);font-size:12px;">P4</span><span class="t" style="left:266.67px;top:723.8px;transform:scaleX(1.0693);font-size:12px;font-weight:bold;">P5</span><span class="t" style="left:298.41px;top:676.0px;transform:scaleX(0.8946);">Data</span><span class="t" style="left:618.41px;top:676.0px;transform:scaleX(0.8946);">Data</span><span class="t" style="left:297.83px;top:700.4px;transform:scaleX(0.8749);">Descrição</span><span class="t" style="left:617.83px;top:700.4px;transform:scaleX(0.8749);">Descrição</span><span class="t" style="left:514.34px;top:679.2px;transform:scaleX(0.8538);">Imagem 9</span><span class="t" style="left:831.03px;top:679.2px;transform:scaleX(0.8615);">Imagem 10</span></div>
<svg class="ic" style="left:930px;top:247px" width="16" height="24" viewBox="930 247 16 24" >
<path d="M933,249.4 V265.6 L936.8,262 L939.6,268.2 L942,267.2 L939.4,261.2 L944.4,261.2 Z" fill="#fff" stroke="#000" stroke-width="1" stroke-linejoin="miter"/>
</svg>
<div class="cr cr1"></div><div class="cr cr2"></div><div class="cr cr3"></div><div class="cr cr4"></div>
</body></html>
